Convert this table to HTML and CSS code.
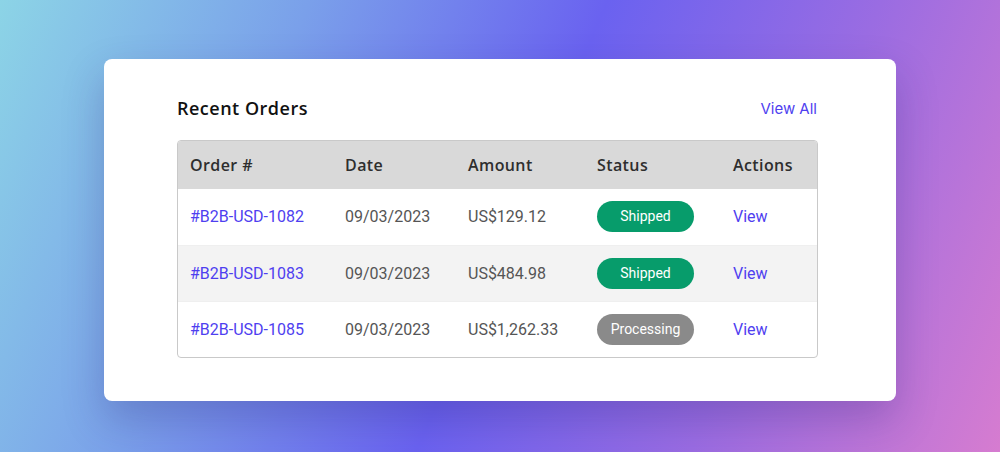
FILE: index.html
```html
<!DOCTYPE html>
<html>
<head>
<meta charset="utf-8">
<link rel="stylesheet" href="styles.css">
</head>
<body>
<div class="stage">
  <section class="card">
    <header class="card-head">
      <h2 class="title">Recent Orders</h2>
      <a class="view-all" href="#">View All</a>
    </header>
    <div class="table-wrap">
      <table class="orders">
        <thead>
          <tr>
            <th class="c1">Order #</th>
            <th class="c2">Date</th>
            <th class="c3">Amount</th>
            <th class="c4">Status</th>
            <th class="c5">Actions</th>
          </tr>
        </thead>
        <tbody>
          <tr>
            <td><a class="link" href="#">#B2B-USD-1082</a></td>
            <td>09/03/2023</td>
            <td>US$129.12</td>
            <td><span class="badge shipped">Shipped</span></td>
            <td><a class="link" href="#">View</a></td>
          </tr>
          <tr class="alt">
            <td><a class="link" href="#">#B2B-USD-1083</a></td>
            <td>09/03/2023</td>
            <td>US$484.98</td>
            <td><span class="badge shipped">Shipped</span></td>
            <td><a class="link" href="#">View</a></td>
          </tr>
          <tr>
            <td><a class="link" href="#">#B2B-USD-1085</a></td>
            <td>09/03/2023</td>
            <td>US$1,262.33</td>
            <td><span class="badge processing">Processing</span></td>
            <td><a class="link" href="#">View</a></td>
          </tr>
        </tbody>
      </table>
    </div>
  </section>
</div>
</body>
</html>
```

FILE: styles.css
```css
* { box-sizing: border-box; }
html, body { margin: 0; padding: 0; }
body {
  width: 1000px;
  height: 452px;
  overflow: hidden;
  font-family: Roboto, "Liberation Sans", sans-serif;
}
.stage {
  width: 1000px;
  height: 452px;
  padding: 59px 104px 0 104px;
  background: linear-gradient(113deg, #8cd4e6 0%, #7aa0ea 26%, #6a62f0 51%, #9a6ce2 74%, #d67cd0 100%);
}
.card {
  width: 792px;
  height: 342px;
  background: #fff;
  border-radius: 8px;
  padding: 36px 78px 0 73px;
  box-shadow: 0 18px 40px rgba(40, 30, 110, 0.25);
}
.card-head {
  display: flex;
  justify-content: space-between;
  align-items: center;
  height: 26px;
  margin-bottom: 19px;
}
.title {
  margin: 0;
  font-family: "Open Sans", Inter, sans-serif;
  font-weight: 600;
  font-size: 18px;
  color: #111;
  letter-spacing: 0.5px;
}
.view-all {
  font-family: Inter, "Open Sans", sans-serif;
  font-size: 15px;
  color: #4f3ff0;
  text-decoration: none;
  padding-right: 1px;
}
.table-wrap {
  border: 1px solid #c9c9c9;
  border-radius: 4px;
  overflow: hidden;
}
.orders {
  width: 100%;
  border-collapse: collapse;
  table-layout: fixed;
}
.orders th {
  background: #d9d9d9;
  height: 48px;
  text-align: left;
  padding: 0 0 0 12px;
  font-family: "Open Sans", Inter, sans-serif;
  font-weight: 600;
  font-size: 16px;
  color: #2e2e2e;
  letter-spacing: 0.4px;
}
.c1 { width: 155px; }
.c2 { width: 123px; }
.c3 { width: 129px; }
.c4 { width: 136px; }
.orders td {
  height: 56px;
  padding: 0 0 0 12px;
  font-size: 16px;
  color: #555;
  border-top: 1px solid #efefef;
}
.orders tbody tr:first-child td { border-top: none; }
.orders tr.alt td { background: #f3f3f3; }
.link {
  color: #4f3ff0;
  text-decoration: none;
}
.badge {
  display: inline-block;
  width: 97px;
  height: 31px;
  line-height: 31px;
  border-radius: 16px;
  text-align: center;
  color: #fff;
  font-size: 14px;
}
.shipped { background: #079c6b; }
.processing { background: #8a8a8a; }
```
